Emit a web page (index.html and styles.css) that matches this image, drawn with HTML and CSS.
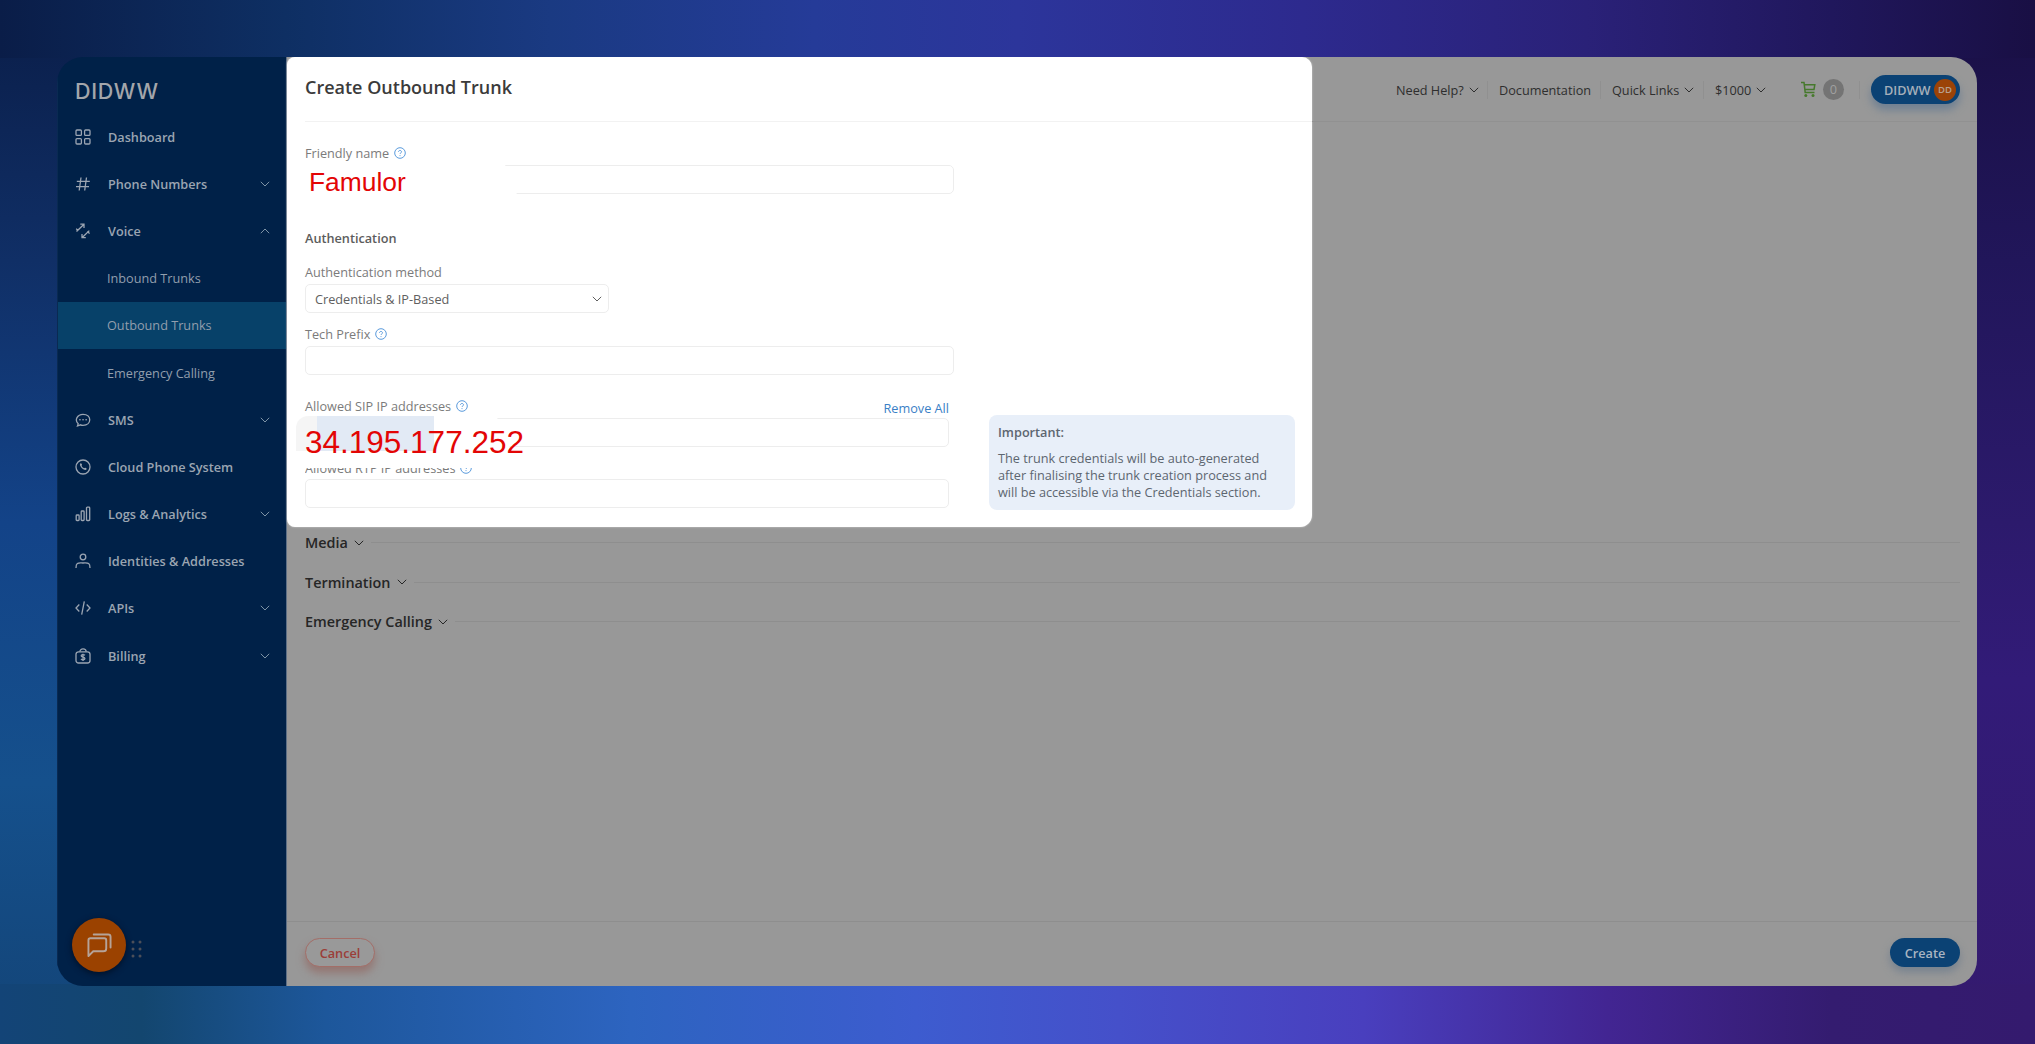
FILE: index.html
```html
<!DOCTYPE html>
<html lang="en">
<head>
  <meta charset="UTF-8" />
  <meta name="viewport" content="width=device-width, initial-scale=1.0" />
  <title>Create Outbound Trunk</title>
  <link rel="stylesheet" href="styles.css">
</head>
<body>
  <svg class="defs" width="0" height="0">
    <symbol id="chev" viewBox="0 0 10 6"><path d="M.8.8 5 5 9.2.8" /></symbol>
    <symbol id="help" viewBox="0 0 12 12"><circle cx="6" cy="6" r="5.3" /><path d="M4.5 4.9c0-2 3-1.9 3 0 0 1-1.5 1.1-1.5 2.1M6 8.2v.9" /></symbol>
  </svg>

  <div class="app">
    <aside class="sidebar">
      <div class="logo">DIDWW</div>
      <nav>
        <a class="item"><svg class="icon" viewBox="0 0 16 16"><rect x="1" y="1" width="5.4" height="5.4" rx="1" /><rect x="9.6" y="1" width="5.4" height="5.4" rx="1" /><rect x="1" y="9.6" width="5.4" height="5.4" rx="1" /><rect x="9.6" y="9.6" width="5.4" height="5.4" rx="1" /></svg><span>Dashboard</span></a>
        <a class="item"><svg class="icon" viewBox="0 0 16 16"><path d="M6 1.5 4.2 14.5M11.5 1.5 9.7 14.5M1.8 5.3h13M1 10.6h13" /></svg><span>Phone Numbers</span><svg class="chev"><use href="#chev" /></svg></a>
        <a class="item"><svg class="icon" viewBox="0 0 16 16"><path d="M1.5 8.5 9 1.2M5.3 1.2H9v3.7M14.3 7.6 7 14.7M7 11v3.7h3.8M1.2 5.6l2 2.2M12.2 8.6l2.4 2" /></svg><span>Voice</span><svg class="chev up"><use href="#chev" /></svg></a>
        <a class="item sub"><span>Inbound Trunks</span></a>
        <a class="item sub active"><span>Outbound Trunks</span></a>
        <a class="item sub"><span>Emergency Calling</span></a>
        <a class="item"><svg class="icon" viewBox="0 0 16 16"><path d="M3.2 11.8C-.8 8 2.4 2.3 8 2.3c9 0 9 11 0 11-1.1 0-1.9-.2-2.5-.5L2.5 14z" /><path class="dots" d="M4.900 7.800h.1M8 7.800h.1M11.100 7.800h.1" /></svg><span>SMS</span><svg class="chev"><use href="#chev" /></svg></a>
        <a class="item"><svg class="icon" viewBox="0 0 16 16"><circle cx="8" cy="8" r="7" /><path d="M5.3 4.5c.8-.8 1.500.3 1.700 1.100.2.7-.6.8-.3 1.500.4.9 1.100 1.600 2 2 .7.3.9-.5 1.600-.3.9.3 1.900 1 1.100 1.800-2 1.800-8.100-4-6.100-6.100z" class="solid" /></svg><span>Cloud Phone System</span></a>
        <a class="item"><svg class="icon" viewBox="0 0 16 16"><rect x="1.200" y="9" width="2.900" height="5.500" rx=".8" /><rect x="6.200" y="5" width="2.900" height="9.500" rx=".8" /><rect x="11.500" y="1.200" width="3.200" height="13.300" rx=".8" /></svg><span>Logs &amp; Analytics</span><svg class="chev"><use href="#chev" /></svg></a>
        <a class="item"><svg class="icon" viewBox="0 0 16 16"><circle cx="8" cy="4" r="2.800" /><path d="M1 15c0-6 2.500-5 7-5s7-1 7 5" /></svg><span>Identities &amp; Addresses</span></a>
        <a class="item"><svg class="icon" viewBox="0 0 16 16"><path d="M4.300 4.500 1 8l3.300 3.500M11.700 4.500 15 8l-3.300 3.500M9.300 1.300 6.700 14.700" /></svg><span>APIs</span><svg class="chev"><use href="#chev" /></svg></a>
        <a class="item"><svg class="icon" viewBox="0 0 16 16"><rect x="1" y="3.800" width="14" height="11.200" rx="2.500" /><path d="M4.800 3.800C4.800 0 11.200 0 11.200 3.800M10 7.300C8.500 6 6 6.600 6.200 8c.2 1.500 3.600 1 3.700 2.600.1 1.400-2.600 1.700-4 .5M8 5.800v7.200" /></svg><span>Billing</span><svg class="chev"><use href="#chev" /></svg></a>
      </nav>
      <div class="chat">
        <div class="chat-btn"><svg viewBox="0 0 26 26"><path d="M1.500 24V7.500q0-2 2-2H18q2 0 2 2V16q0 3-3 3H6.500zM7 1.500h15q2.500 0 2.500 2.500v11" /></svg></div>
        <svg class="grip" viewBox="0 0 11 18"><path d="M2 2h.01M9 2h.01M2 9h.01M9 9h.01M2 16h.01M9 16h.01" /></svg>
      </div>
    </aside>

    <main class="main">
      <div class="top">
        <section class="panel">
          <h1>Create Outbound Trunk</h1>
          <div class="panel-body">
            <div class="form">
              <div class="field name">
                <label>Friendly name <svg class="help"><use href="#help" /></svg></label>
                <div class="input"><div class="cover"></div><span class="note">Famulor</span></div>
              </div>
              <h2>Authentication</h2>
              <div class="field method">
                <label>Authentication method</label>
                <div class="input select"><span>Credentials &amp; IP-Based</span><svg class="chev"><use href="#chev" /></svg></div>
              </div>
              <div class="field prefix">
                <label>Tech Prefix <svg class="help"><use href="#help" /></svg></label>
                <div class="input"></div>
              </div>
              <div class="field sip">
                <label>Allowed SIP IP addresses <svg class="help"><use href="#help" /></svg><a class="remove">Remove All</a></label>
                <div class="input"><div class="cover"></div><div class="smudge"></div><span class="note">34.195.177.252</span></div>
              </div>
              <div class="field rtp">
                <label>Allowed RTP IP addresses <svg class="help"><use href="#help" /></svg></label>
                <div class="input"></div>
              </div>
            </div>
            <div class="info">
              <b>Important:</b>
              <p>The trunk credentials will be auto-generated<br>after finalising the trunk creation process and<br>will be accessible via the Credentials section.</p>
            </div>
          </div>
        </section>
        <header class="topbar">
          <a class="help-link">Need Help? <svg class="chev"><use href="#chev" /></svg></a>
          <a class="docs">Documentation</a>
          <a class="links">Quick Links <svg class="chev"><use href="#chev" /></svg></a>
          <a class="balance">$1000 <svg class="chev"><use href="#chev" /></svg></a>
          <div class="cart"><svg viewBox="0 0 15 17"><path d="M0 1.500h3L4.200 11.500h9.300M3.600 3.800h10.200L13 8.500H4.300" /><circle class="solid" cx="4.800" cy="14.500" r="1.500" /><circle class="solid" cx="12" cy="14.500" r="1.500" /></svg><span>0</span></div>
          <div class="account">DIDWW<span>DD</span></div>
        </header>
      </div>

      <div class="sections">
        <div class="section">Media <svg class="chev"><use href="#chev" /></svg></div>
        <div class="section">Termination <svg class="chev"><use href="#chev" /></svg></div>
        <div class="section">Emergency Calling <svg class="chev"><use href="#chev" /></svg></div>
      </div>

      <footer class="footer">
        <button class="btn cancel">Cancel</button>
        <button class="btn create">Create</button>
      </footer>
    </main>
  </div>
</body>
</html>
```

FILE: styles.css
```css
* { box-sizing: border-box; }
body {
  margin: 0; padding: 57px 58px 58px 57px; width: 2035px; height: 1044px; overflow: hidden;
  font-family: "Open Sans", "Noto Sans", sans-serif; font-size: 12.7px;
  background:
    linear-gradient(90deg, #0a1d48, #0e2f63 14%, #1a3a82 27%, #253b98 40%, #2c359b 50%, #2d2a8e 64%, #2a2178 78%, #20175c 90%, #190f44) top / 100% 58px no-repeat,
    linear-gradient(90deg, #134477, #13466f 7%, #1d579b 16%, #2d64c0 31%, #3d5ccf 45%, #4550ca 55%, #493fbe 67%, #422592 79%, #341c70 90%, #341a6e) bottom / 100% 60px no-repeat,
    linear-gradient(#0a1d48, #102f66 25%, #134388 50%, #15508c 75%, #134477) left / 100px 100% no-repeat,
    linear-gradient(#190f44, #21165a 25%, #2c1a6c 50%, #321b78 65%, #341a6e) right / 100px 100% no-repeat;
}
svg { fill: none; stroke: currentColor; display: block; flex: none; }
.defs { position: absolute; }
.chev { width: 10px; height: 6px; stroke-width: 1; }
.chev.up { transform: scaleY(-1); }
.help { width: 12px; height: 12px; color: #5b9bdc; stroke-width: 1; margin-left: 5px; }

.app { display: flex; width: 1920px; height: 929px; border-radius: 26px; overflow: hidden; }

/* sidebar */
.sidebar { width: 230px; background: #002148; color: #9ba5b2; display: flex; flex-direction: column; border-left: 1px solid #0a2a52; }
.logo { height: 56px; padding: 20px 0 0 17px; font: 500 21.5px/28px Inter, sans-serif; letter-spacing: .7px; color: #a3a6ab; }
.item { display: flex; align-items: center; height: 47.2px; padding: 0 16px 0 17px; font-weight: 600; }
.item .icon { width: 16px; height: 16px; stroke-width: 1.3; margin-right: 17px; }
.item .chev { margin-left: auto; color: #7d93a6; }
.item.sub { padding-left: 49px; font-weight: 400; color: #929ead; }
.item.active { background: #074169; }
.dots { stroke-width: 1.6; stroke-linecap: round; }
.solid { fill: currentColor; stroke: none; }
.chat { display: flex; align-items: center; margin: auto 0 14px 14px; }
.chat-btn { width: 54px; height: 54px; border-radius: 50%; background: #9b4200; color: #b6a398; display: grid; place-items: center; box-shadow: 0 2px 6px #001027; }
.chat-btn svg { width: 25px; height: 25px; stroke-width: 2; stroke-linejoin: round; stroke-linecap: round; }
.grip { width: 11px; height: 18px; margin: 7px 0 0 5px; color: #4c4f59; stroke-width: 3; stroke-linecap: round; }

/* main */
.main { flex: 1; display: flex; flex-direction: column; background: #989898; color: #333; }
.top { display: flex; height: 470px; }
.panel { width: 1025px; height: 470px; background: #fff; border-radius: 8px 10px 12px 8px; padding-left: 18px; box-shadow: 0 0 2px #d5d5d5; }
h1 { margin: 0; height: 65px; font-size: 18px; line-height: 61px; font-weight: 600; color: #3b3b3b; border-bottom: 1px solid #f2f2f2; }
.panel-body { display: flex; }
.form { width: 684px; padding-top: 22px; }
.field { width: 649px; }
label { display: flex; align-items: center; height: 18px; color: #7b7b7b; }
.input { position: relative; height: 29px; border: 1px solid #ededed; border-radius: 5px; background: #fff; }
.name label { margin-bottom: 3px; }
h2 { margin: 35px 0 16px; font-size: 12.700px; line-height: 18px; font-weight: 600; color: #5c5c5c; }
.method { width: 304px; }
.method label { margin-bottom: 3px; }
.select { display: flex; align-items: center; justify-content: space-between; padding: 0 6px 0 9px; color: #606060; }
.prefix { margin-top: 12px; }
.prefix label { margin-bottom: 3px; }
.sip, .rtp { width: 644px; }
.sip { margin-top: 22px; }
.sip label { margin-bottom: 3px; }
.remove { margin-left: auto; position: relative; top: 2px; color: #3a7fc6; }
.rtp { margin-top: 12px; }
.rtp label { margin-bottom: 2px; clip-path: inset(9px 0 0 0); }
.cover { position: absolute; left: -12px; top: -2px; height: 34px; background: #fff; }
.name .cover { width: 229px; clip-path: polygon(0 0, 92% 0, 98% 100%, 0 100%); }
.sip .cover { width: 218px; height: 35px; clip-path: polygon(0 0, 93% 0, 100% 100%, 0 100%); }
.smudge { position: absolute; left: -10px; top: -3px; width: 138px; height: 35px; border-radius: 12px 0 0 0; background: linear-gradient(90deg, #f5f5f5 21px, #e2eaf5 21px); }
.note { position: absolute; font-family: "Liberation Sans", Arial, sans-serif; color: #e30505; white-space: nowrap; }
.name .note { left: 3px; top: 1px; font-size: 26.400px; line-height: 30px; }
.sip .note { left: -1px; top: 5px; font-size: 31.500px; line-height: 36px; }
.info { width: 306px; height: 95px; margin-top: 293px; padding: 9px; border-radius: 8px; background: #e8eff9; color: #5d6670; line-height: 17px; white-space: nowrap; }
.info b { font-weight: 600; }
.info p { margin: 9px 0 0; }

/* top bar */
.topbar { flex: 1; height: 65px; display: flex; align-items: center; padding: 1px 18px 0 84px; border-bottom: 1px solid #919191; color: #2e2e2e; }
.topbar a { display: flex; align-items: center; height: 18px; border-right: 1px solid #909090; }
.topbar .chev { margin-left: 5px; }
.help-link { width: 92px; }
.docs { width: 113px; padding-left: 11px; }
.links { width: 103px; padding-left: 11px; }
.topbar .balance { width: 97px; padding-left: 11px; border: 0; }
.cart { display: flex; align-items: center; width: 59px; height: 18px; border-right: 1px solid #909090; color: #46792c; }
.cart svg { width: 15px; height: 17px; stroke-width: 1.500; }
.cart span { width: 21px; height: 21px; margin-left: 7px; border-radius: 50%; background: #747474; color: #a0a0a0; text-align: center; line-height: 21px; }
.account { display: flex; align-items: center; justify-content: space-between; width: 89px; height: 29px; margin-left: 11px; padding: 0 4px 0 13px; border-radius: 15px; background: #0b4274; color: #a5afba; font-weight: 600; box-shadow: 0 6px 8px #6f8093; }
.account span { width: 22px; height: 22px; border-radius: 50%; background: #9b4308; color: #b8a090; font-size: 9.500px; line-height: 22px; text-align: center; }

/* everything in the main column sits one pixel in from the sidebar edge */
.main { border-left: 1px solid #5d6f86; }
.topbar, .footer, .sections { padding-right: 17px; }

/* collapsed sections */
.sections { padding-left: 18px; flex: 1; }
.section { display: flex; align-items: center; height: 39.500px; font-size: 14.400px; font-weight: 600; color: #262626; }
.section:first-child { margin-top: -4px; }
.section .chev { margin-left: 6px; }
.section::after { content: ""; flex: 1; height: 1px; margin-left: 7px; background: #8e8e8e; }

.footer { display: flex; justify-content: space-between; height: 65px; padding-top: 16px; padding-left: 18px; border-top: 1px solid #8e8e8e; }
.btn { width: 70px; height: 29px; border-radius: 15px; font: 600 12.700px "Open Sans", sans-serif; padding: 0; }
.cancel { color: #9b3e38; background: #999; border: 1px solid #a36e68; box-shadow: 0 6px 8px #947672; }
.create { color: #a9b5c2; background: #0b4274; border: 0; box-shadow: 0 5px 8px #76828f; }
```
